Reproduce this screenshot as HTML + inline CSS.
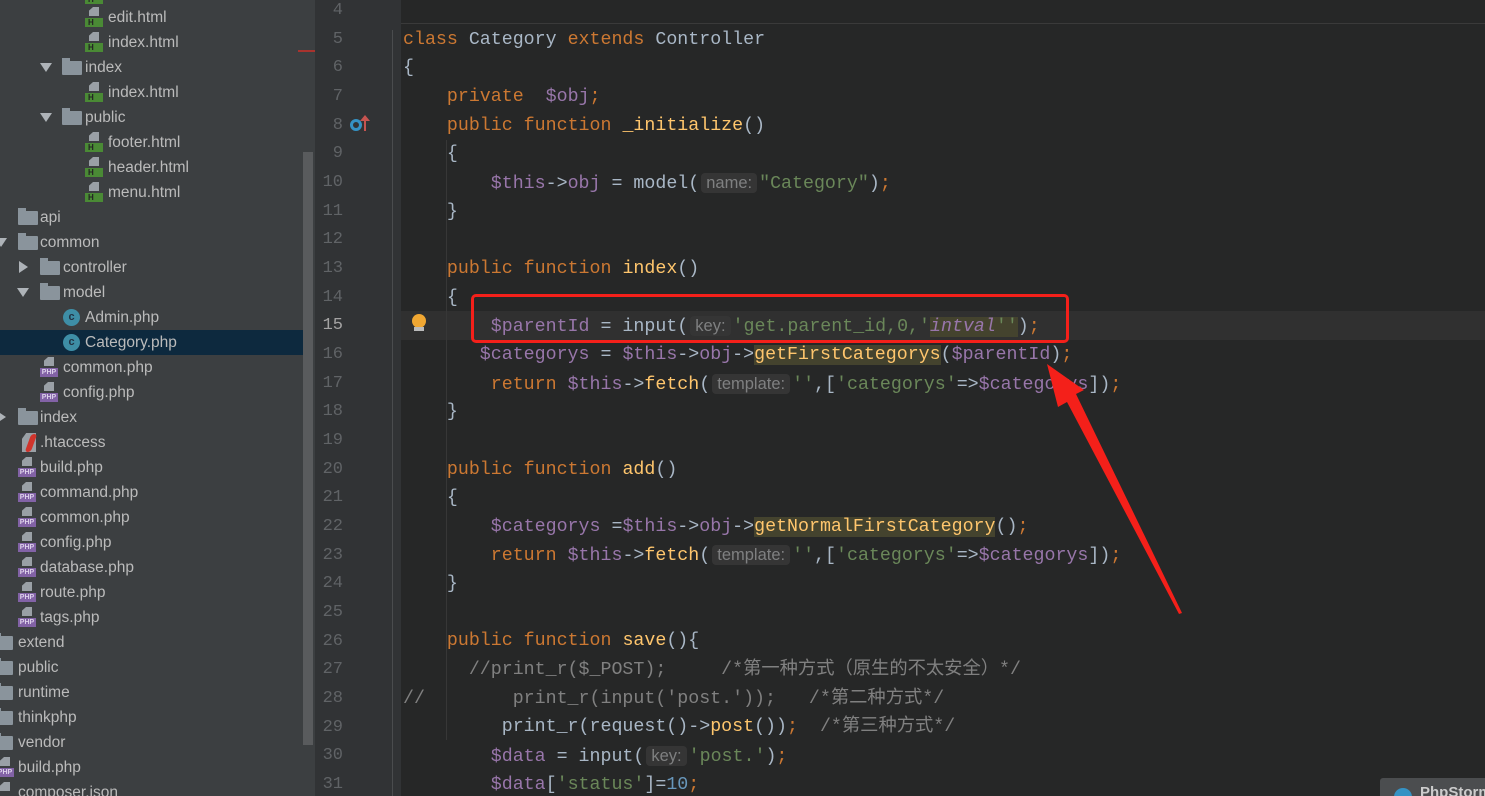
<!DOCTYPE html>
<html><head><meta charset="utf-8">
<style>
*{margin:0;padding:0;box-sizing:border-box}
html,body{width:1485px;height:796px;overflow:hidden}
body{background:#262727;position:relative;font-family:"Liberation Sans","Noto Sans CJK SC",sans-serif}
#side{position:absolute;left:0;top:0;width:315px;height:796px;background:#3c3f41;overflow:hidden}
.r{position:absolute;height:25px;line-height:25px;font-size:15.5px;color:#bbbbbb;white-space:nowrap}
.sel{position:absolute;left:0;top:329.5px;width:303px;height:25px;background:#0d293e}
.tri{position:absolute;width:0;height:0;border-left:6px solid transparent;border-right:6px solid transparent;border-top:9px solid #aeb3b8}
.trr{position:absolute;width:0;height:0;border-top:6px solid transparent;border-bottom:6px solid transparent;border-left:9px solid #aeb3b8}
.fd{position:absolute;width:20px;height:14px;background:#8a949c;border-radius:1px}
.fd:before{content:"";position:absolute;left:0;top:-3px;width:8px;height:4px;background:#8a949c}
.doc{position:absolute;width:18px;height:20px}
.doc i{position:absolute;left:4px;top:0;width:10px;height:9px;background:#9aa0a6;clip-path:polygon(40% 0,100% 0,100% 100%,0 100%,0 40%)}
.doc b{position:absolute;left:0;bottom:0;width:18px;height:9px;font-size:8px;line-height:9px;font-weight:bold;text-align:center;font-family:"Liberation Sans",sans-serif}
.h b{background:#4a8a35;color:#222;text-align:left;padding-left:3px}
.p b{background:#8262a6;color:#dcd0ea;font-size:7px}
.cc{position:absolute;width:17px;height:17px;border-radius:50%;background:#3e8ea6;color:#234;font-size:11px;line-height:17px;text-align:center;font-weight:bold}
#sb{position:absolute;left:303px;top:152px;width:10px;height:593px;background:#595b5d}
#gut{position:absolute;left:315px;top:0;width:86px;height:796px;background:#313335}
.ln{position:absolute;left:315px;width:28px;text-align:right;font-family:"Liberation Mono",monospace;font-size:17px;color:#606366;height:28.67px;line-height:28.67px}
#code{position:absolute;left:403px;top:-3px;font-family:"Liberation Mono","Noto Sans CJK SC",monospace;font-size:18.3px;line-height:28.67px;color:#a9b7c6}
#code div{height:28.67px;white-space:pre}
.k{color:#cc7832}.v{color:#9876aa}.s{color:#6a8759}.f{color:#ffc66d}.c{color:#808080}.n{color:#6897bb}
.hn{font-family:"Liberation Sans",sans-serif;font-size:16.5px;color:#7f8081;background:#353535;border-radius:4px;padding:1px 5px;margin:0 2px}
.hl{background:#44432e}
.it{font-style:italic}
</style></head><body>
<div id="side">
<div class="sel"></div>
<div class="doc h" style="left:85px;top:-16px"><i></i><b>H</b></div>
<div class="doc h" style="left:85px;top:7px"><i></i><b>H</b></div><div class="r" style="left:108px;top:4.5px">edit.html</div>
<div class="doc h" style="left:85px;top:32px"><i></i><b>H</b></div><div class="r" style="left:108px;top:29.5px">index.html</div>
<div class="tri" style="left:40px;top:63px"></div><div class="fd" style="left:62px;top:61px"></div><div class="r" style="left:85px;top:54.5px">index</div>
<div class="doc h" style="left:85px;top:82px"><i></i><b>H</b></div><div class="r" style="left:108px;top:79.5px">index.html</div>
<div class="tri" style="left:40px;top:113px"></div><div class="fd" style="left:62px;top:111px"></div><div class="r" style="left:85px;top:104.5px">public</div>
<div class="doc h" style="left:85px;top:132px"><i></i><b>H</b></div><div class="r" style="left:108px;top:129.5px">footer.html</div>
<div class="doc h" style="left:85px;top:157px"><i></i><b>H</b></div><div class="r" style="left:108px;top:154.5px">header.html</div>
<div class="doc h" style="left:85px;top:182px"><i></i><b>H</b></div><div class="r" style="left:108px;top:179.5px">menu.html</div>
<div class="fd" style="left:18px;top:211px"></div><div class="r" style="left:40px;top:204.5px">api</div>
<div class="tri" style="left:-5px;top:238px"></div><div class="fd" style="left:18px;top:236px"></div><div class="r" style="left:40px;top:229.5px">common</div>
<div class="trr" style="left:19px;top:261px"></div><div class="fd" style="left:40px;top:261px"></div><div class="r" style="left:63px;top:254.5px">controller</div>
<div class="tri" style="left:17px;top:288px"></div><div class="fd" style="left:40px;top:286px"></div><div class="r" style="left:63px;top:279.5px">model</div>
<div class="cc" style="left:63px;top:309px">c</div><div class="r" style="left:85px;top:304.5px">Admin.php</div>
<div class="cc" style="left:63px;top:334px">c</div><div class="r" style="left:85px;top:329.5px">Category.php</div>
<div class="doc p" style="left:40px;top:357px"><i></i><b>PHP</b></div><div class="r" style="left:63px;top:354.5px">common.php</div>
<div class="doc p" style="left:40px;top:382px"><i></i><b>PHP</b></div><div class="r" style="left:63px;top:379.5px">config.php</div>
<div class="trr" style="left:-3px;top:411px"></div><div class="fd" style="left:18px;top:411px"></div><div class="r" style="left:40px;top:404.5px">index</div>
<div style="position:absolute;left:22px;top:433px;width:14px;height:19px;background:#9aa0a6;clip-path:polygon(30% 0,100% 0,100% 100%,0 100%,0 30%)"></div><div style="position:absolute;left:28px;top:434px;width:6px;height:18px;background:#d0342c;transform:skewX(-20deg);border-radius:3px"></div><div class="r" style="left:40px;top:429.5px">.htaccess</div>
<div class="doc p" style="left:18px;top:457px"><i></i><b>PHP</b></div><div class="r" style="left:40px;top:454.5px">build.php</div>
<div class="doc p" style="left:18px;top:482px"><i></i><b>PHP</b></div><div class="r" style="left:40px;top:479.5px">command.php</div>
<div class="doc p" style="left:18px;top:507px"><i></i><b>PHP</b></div><div class="r" style="left:40px;top:504.5px">common.php</div>
<div class="doc p" style="left:18px;top:532px"><i></i><b>PHP</b></div><div class="r" style="left:40px;top:529.5px">config.php</div>
<div class="doc p" style="left:18px;top:557px"><i></i><b>PHP</b></div><div class="r" style="left:40px;top:554.5px">database.php</div>
<div class="doc p" style="left:18px;top:582px"><i></i><b>PHP</b></div><div class="r" style="left:40px;top:579.5px">route.php</div>
<div class="doc p" style="left:18px;top:607px"><i></i><b>PHP</b></div><div class="r" style="left:40px;top:604.5px">tags.php</div>
<div class="fd" style="left:-7px;top:636px"></div><div class="r" style="left:18px;top:629.5px">extend</div>
<div class="fd" style="left:-7px;top:661px"></div><div class="r" style="left:18px;top:654.5px">public</div>
<div class="fd" style="left:-7px;top:686px"></div><div class="r" style="left:18px;top:679.5px">runtime</div>
<div class="fd" style="left:-7px;top:711px"></div><div class="r" style="left:18px;top:704.5px">thinkphp</div>
<div class="fd" style="left:-7px;top:736px"></div><div class="r" style="left:18px;top:729.5px">vendor</div>
<div class="doc p" style="left:-4px;top:757px"><i></i><b>PHP</b></div><div class="r" style="left:18px;top:754.5px">build.php</div>
<div class="doc" style="left:-4px;top:782px"><i></i></div><div class="r" style="left:18px;top:779.5px">composer.json</div>
<div id="sb"></div>
</div>
<div id="gut"></div>
<div style="position:absolute;left:298px;top:50px;width:17px;height:2px;background:#a8332e"></div>
<div style="position:absolute;left:392px;top:30px;width:1px;height:766px;background:#4a4c4e"></div>
<div style="position:absolute;left:401px;top:23px;width:1084px;height:1px;background:#3a3a3a"></div>
<div style="position:absolute;left:401px;top:311px;width:1084px;height:29px;background:#303030"></div>
<div style="position:absolute;left:446px;top:140px;width:1px;height:600px;background:#373737"></div>
<div class="ln" style="top:-3px">4</div><div class="ln" style="top:25.7px">5</div><div class="ln" style="top:54.3px">6</div><div class="ln" style="top:83px">7</div><div class="ln" style="top:111.7px">8</div><div class="ln" style="top:140.3px">9</div><div class="ln" style="top:169px">10</div><div class="ln" style="top:197.7px">11</div><div class="ln" style="top:226.4px">12</div><div class="ln" style="top:255px">13</div><div class="ln" style="top:283.7px">14</div><div class="ln" style="top:312.4px;color:#a4a3a3">15</div><div class="ln" style="top:341px">16</div><div class="ln" style="top:369.7px">17</div><div class="ln" style="top:398.4px">18</div><div class="ln" style="top:427px">19</div><div class="ln" style="top:455.7px">20</div><div class="ln" style="top:484.4px">21</div><div class="ln" style="top:513px">22</div><div class="ln" style="top:541.7px">23</div><div class="ln" style="top:570.4px">24</div><div class="ln" style="top:599px">25</div><div class="ln" style="top:627.7px">26</div><div class="ln" style="top:656.4px">27</div><div class="ln" style="top:685px">28</div><div class="ln" style="top:713.7px">29</div><div class="ln" style="top:742.4px">30</div><div class="ln" style="top:771px">31</div>
<div style="position:absolute;left:350px;top:119px;width:12px;height:12px;border-radius:50%;border:3px solid #3592c4"></div>
<div style="position:absolute;left:364px;top:117px;width:2px;height:14px;background:#c75450"></div>
<div style="position:absolute;left:360px;top:115px;width:0;height:0;border-left:5px solid transparent;border-right:5px solid transparent;border-bottom:6px solid #c75450"></div>
<div style="position:absolute;left:412px;top:314px;width:14px;height:14px;border-radius:50%;background:#f0a732"></div>
<div style="position:absolute;left:414px;top:327px;width:10px;height:4px;background:#bbb"></div>
<div id="code"><div></div><div><span class="k">class</span> Category <span class="k">extends</span> Controller</div><div>{</div><div>    <span class="k">private</span>  <span class="v">$obj</span><span class="k">;</span></div><div>    <span class="k">public function</span> <span class="f">_initialize</span>()</div><div>    {</div><div>        <span class="v">$this</span>-><span class="v">obj</span> = model(<span class="hn">name:</span><span class="s">"Category"</span>)<span class="k">;</span></div><div>    }</div><div></div><div>    <span class="k">public function</span> <span class="f">index</span>()</div><div>    {</div><div>        <span class="v">$parentId</span> = input(<span class="hn">key:</span><span class="s">'get.parent_id,0,'</span><span class="hl"><span class="v it">intval</span><span class="s">''</span></span>)<span class="k">;</span></div><div>       <span class="v">$categorys</span> = <span class="v">$this</span>-><span class="v">obj</span>-><span class="f hl">getFirstCategorys</span>(<span class="v">$parentId</span>)<span class="k">;</span></div><div>        <span class="k">return</span> <span class="v">$this</span>-><span class="f">fetch</span>(<span class="hn">template:</span><span class="s">''</span>,[<span class="s">'categorys'</span>=><span class="v">$categorys</span>])<span class="k">;</span></div><div>    }</div><div></div><div>    <span class="k">public function</span> <span class="f">add</span>()</div><div>    {</div><div>        <span class="v">$categorys</span> =<span class="v">$this</span>-><span class="v">obj</span>-><span class="f hl">getNormalFirstCategory</span>()<span class="k">;</span></div><div>        <span class="k">return</span> <span class="v">$this</span>-><span class="f">fetch</span>(<span class="hn">template:</span><span class="s">''</span>,[<span class="s">'categorys'</span>=><span class="v">$categorys</span>])<span class="k">;</span></div><div>    }</div><div></div><div>    <span class="k">public function</span> <span class="f">save</span>(){</div><div><span class="c">      //print_r($_POST);     /*第一种方式（原生的不太安全）*/</span></div><div><span class="c">//        print_r(input('post.'));   /*第二种方式*/</span></div><div>         print_r(request()-><span class="f">post</span>())<span class="k">;</span>  <span class="c">/*第三种方式*/</span></div><div>        <span class="v">$data</span> = input(<span class="hn">key:</span><span class="s">'post.'</span>)<span class="k">;</span></div><div>        <span class="v">$data</span>[<span class="s">'status'</span>]=<span class="n">10</span><span class="k">;</span></div></div>
<div style="position:absolute;left:471px;top:294px;width:598px;height:49px;border:3px solid #f4201a;border-radius:5px"></div>
<svg style="position:absolute;left:0;top:0" width="1485" height="796"><polygon points="1047,364 1084,390 1076,394 1182,613 1179,614 1067,402 1058,407" fill="#f4201a"/></svg>
<div style="position:absolute;left:1380px;top:778px;width:105px;height:18px;background:#4b4d4f;border-radius:3px 0 0 0;overflow:hidden"></div>
<div style="position:absolute;left:1394px;top:788px;width:18px;height:18px;border-radius:50%;background:#3592c4"></div>
<div style="position:absolute;left:1420px;top:784px;color:#ccc;font-size:15px;font-weight:bold">PhpStorm</div>
</body></html>
